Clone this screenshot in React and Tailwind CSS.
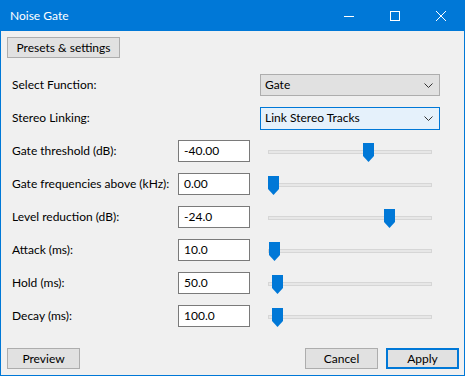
import React from "react";

const font = { fontFamily: 'Lato, "Liberation Sans", sans-serif' };

function Thumb() {
  return (
    <svg width="11" height="19" viewBox="0 0 11 19" className="block">
      <polygon points="0,0 11,0 11,13 5.5,19 0,13" fill="#0078d7" />
    </svg>
  );
}

function Slider({ pos }) {
  return (
    <div className="relative ml-[18px] w-[164px] h-[22px]">
      <div className="absolute left-0 right-0 top-[10px] h-[4px] border border-[#d6d6d6] bg-[#e7e7e7]" />
      <div className="absolute top-[3px]" style={{ left: pos }}>
        <Thumb />
      </div>
    </div>
  );
}

function Chevron() {
  return (
    <svg width="9" height="5" viewBox="0 0 9 5" className="block">
      <polyline points="0.5,0.5 4.5,4.5 8.5,0.5" fill="none" stroke="#333" strokeWidth="1" />
    </svg>
  );
}

function Row({ label, value, pos }) {
  return (
    <div className="flex items-center h-[22px]">
      <div className="w-[166px] text-[12px] text-black whitespace-nowrap">{label}</div>
      <div className="w-[72px] h-[22px] bg-white border border-[#7a7a7a] flex items-center pl-[5px] text-[12px] text-black">
        {value}
      </div>
      <Slider pos={pos} />
    </div>
  );
}

export default function App() {
  return (
    <div className="w-[465px] h-[376px] bg-[#f0f0f0] border border-t-0 border-[#0078d7] flex flex-col overflow-hidden" style={font}>
      <div className="h-[31px] bg-[#0078d7] flex items-center shrink-0">
        <div className="pl-[9px] text-[12px] text-white flex-1">Noise Gate</div>
        <div className="w-[46px] h-[31px] flex items-center justify-center">
          <svg width="10" height="10" viewBox="0 0 10 10"><line x1="0" y1="5.5" x2="10" y2="5.5" stroke="white" strokeWidth="1" /></svg>
        </div>
        <div className="w-[46px] h-[31px] flex items-center justify-center">
          <svg width="10" height="10" viewBox="0 0 10 10"><rect x="0.5" y="0.5" width="9" height="9" fill="none" stroke="white" strokeWidth="1" /></svg>
        </div>
        <div className="w-[46px] h-[31px] flex items-center justify-center">
          <svg width="10" height="10" viewBox="0 0 10 10"><path d="M0 0 L10 10 M10 0 L0 10" stroke="white" strokeWidth="1" /></svg>
        </div>
      </div>

      <div className="flex-1 flex flex-col pl-[6px] pr-[5px]">
        <div className="mt-[6px] flex">
          <div className="w-[113px] h-[21px] bg-[#e1e1e1] border border-[#adadad] flex items-center justify-center text-[12px] text-black">
            Presets &amp; settings
          </div>
        </div>

        <div className="mt-[16px] pl-[5px] flex flex-col gap-[11px]">
          <div className="flex items-center h-[22px]">
            <div className="w-[248px] text-[12px] text-black">Select Function:</div>
            <div className="w-[180px] h-[22px] bg-[#e1e1e1] border border-[#adadad] flex items-center justify-between pl-[4px] pr-[6px] text-[12px] text-black">
              <span>Gate</span>
              <Chevron />
            </div>
          </div>
          <div className="flex items-center h-[22px]">
            <div className="w-[248px] text-[12px] text-black">Stereo Linking:</div>
            <div className="w-[180px] h-[23px] bg-[#e5f1fb] border border-[#0078d7] flex items-center justify-between pl-[4px] pr-[6px] text-[12px] text-black">
              <span>Link Stereo Tracks</span>
              <Chevron />
            </div>
          </div>
          <Row label="Gate threshold (dB):" value="-40.00" pos={95} />
          <Row label="Gate frequencies above (kHz):" value="0.00" pos={0} />
          <Row label="Level reduction (dB):" value="-24.0" pos={116} />
          <Row label="Attack (ms):" value="10.0" pos={1} />
          <Row label="Hold (ms):" value="50.0" pos={4} />
          <Row label="Decay (ms):" value="100.0" pos={4} />
        </div>

        <div className="mt-auto mb-[6px] flex items-center">
          <div className="w-[73px] h-[21px] bg-[#e1e1e1] border border-[#adadad] flex items-center justify-center text-[12px] text-black">
            Preview
          </div>
          <div className="flex-1" />
          <div className="w-[73px] h-[21px] bg-[#e1e1e1] border border-[#adadad] flex items-center justify-center text-[12px] text-black">
            Cancel
          </div>
          <div className="ml-[8px] w-[73px] h-[21px] bg-[#e1e1e1] border-2 border-[#0078d7] flex items-center justify-center text-[12px] text-black">
            Apply
          </div>
        </div>
      </div>
    </div>
  );
}
